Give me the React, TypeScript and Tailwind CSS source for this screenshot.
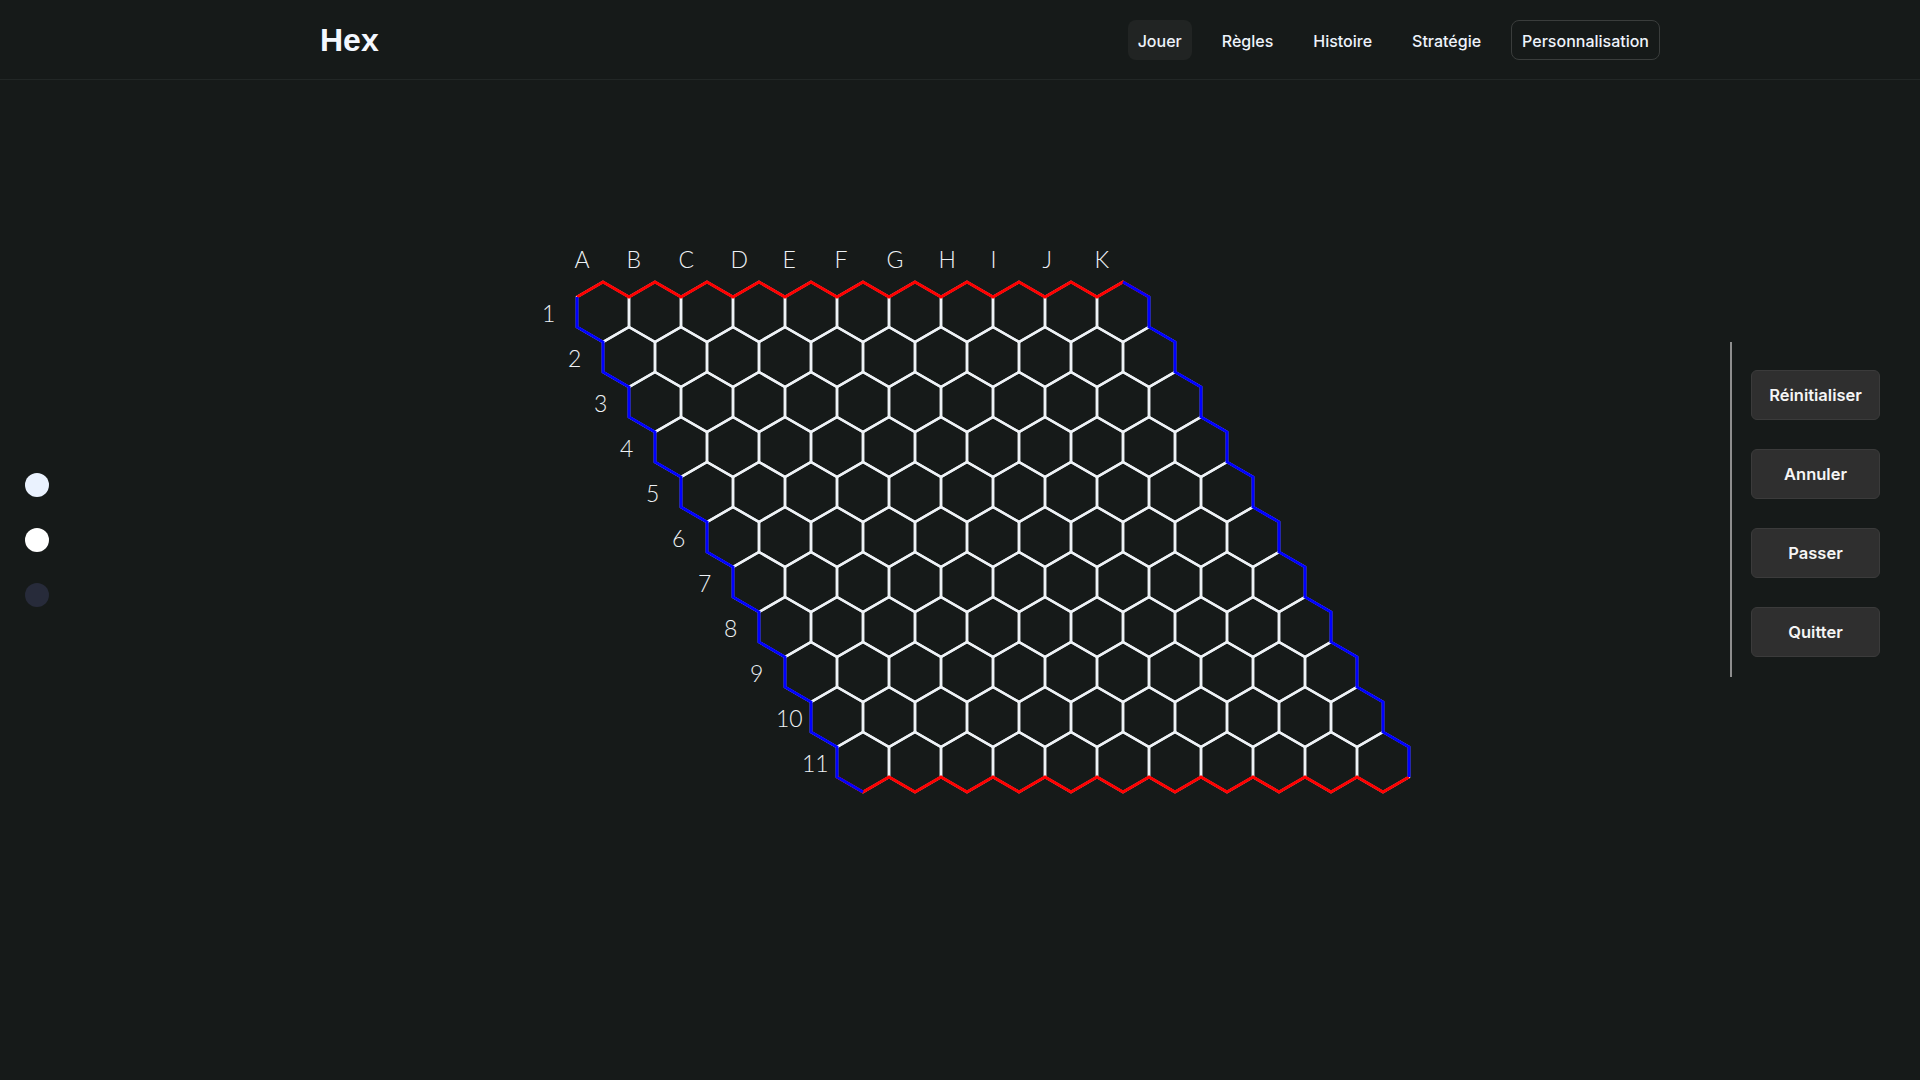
import React from "react";

const N = 11;
const COLS = ["A", "B", "C", "D", "E", "F", "G", "H", "I", "J", "K"];

// hex geometry (pointy top), in svg coords
const R = 30;
const HW = 26;
const center = (r: number, c: number) => ({ x: 73 + 52 * c + 26 * r, y: 72 + 45 * r });

const pts = (r: number, c: number) => {
  const { x, y } = center(r, c);
  return {
    t: [x, y - R],
    ur: [x + HW, y - R / 2],
    lr: [x + HW, y + R / 2],
    b: [x, y + R],
    ll: [x - HW, y + R / 2],
    ul: [x - HW, y - R / 2],
  };
};

const toStr = (list: number[][]) => list.map((p) => p.join(",")).join(" ");

function Board() {
  const hexes = [];
  for (let r = 0; r < N; r++) {
    for (let c = 0; c < N; c++) {
      const p = pts(r, c);
      hexes.push(
        <polygon
          key={`${r}-${c}`}
          points={toStr([p.t, p.ur, p.lr, p.b, p.ll, p.ul])}
          fill="none"
          stroke="#eef2f6"
          strokeWidth={2.5}
        />
      );
    }
  }

  const top: number[][] = [];
  const bottom: number[][] = [];
  const left: number[][] = [];
  const right: number[][] = [];
  for (let i = 0; i < N; i++) {
    const a = pts(0, i);
    if (i === 0) top.push(a.ul);
    top.push(a.t, a.ur);
    const b = pts(N - 1, i);
    if (i === 0) bottom.push(b.ll);
    bottom.push(b.b, b.lr);
    const l = pts(i, 0);
    left.push(l.ul, l.ll, l.b);
    const rr = pts(i, N - 1);
    right.push(rr.t, rr.ur, rr.lr);
  }

  return (
    <svg width={890} height={570} className="mt-[160px] shrink-0">
      <g fill="#eef2f6" fontFamily="Lato, 'Open Sans', sans-serif" fontWeight={300} fontSize={23}>
        {COLS.map((l, c) => (
          <text key={l} x={44.5 + 52 * c} y={28.3}>
            {l}
          </text>
        ))}
        {COLS.map((_, r) => (
          <text key={r} x={12 + 26 * r} y={center(r, 0).y + 9.5}>
            {r + 1}
          </text>
        ))}
      </g>
      {hexes}
      <polyline points={toStr(top)} fill="none" stroke="#ff0000" strokeWidth={3} />
      <polyline points={toStr(bottom)} fill="none" stroke="#ff0000" strokeWidth={3} />
      <polyline points={toStr(left)} fill="none" stroke="#0000ff" strokeWidth={3} />
      <polyline points={toStr(right)} fill="none" stroke="#0000ff" strokeWidth={3} />
    </svg>
  );
}

const navItems = ["Règles", "Histoire", "Stratégie"];
const actions = ["Réinitialiser", "Annuler", "Passer", "Quitter"];

export default function App() {
  return (
    <div className="min-h-screen w-full bg-[#161a19] text-white overflow-hidden">
      <header className="h-20 border-b border-[#222726] flex items-center justify-between pl-[320px] pr-[260px]">
        <h1 className="text-[32px] font-bold font-['Liberation_Sans',Arial,sans-serif] text-[#f4f8ff]">Hex</h1>
        <nav className="flex items-center gap-5 font-['Inter',sans-serif] text-[16px] font-medium text-[#eef3fb]">
          <button className="h-10 px-2.5 pt-0.5 rounded-lg bg-[#212423]">Jouer</button>
          {navItems.map((n) => (
            <button key={n} className="h-10 px-2.5 pt-0.5">
              {n}
            </button>
          ))}
          <button className="h-10 px-2.5 pt-0.5 rounded-lg border border-[#3a3d3c]">Personnalisation</button>
        </nav>
      </header>

      <main className="flex h-[1000px]">
        <div className="w-[530px] shrink-0 pl-[25px] pt-[393px]">
          <div className="flex flex-col gap-[31px]">
            <div className="w-6 h-6 rounded-full bg-[#eaf2fe]" />
            <div className="w-6 h-6 rounded-full bg-white" />
            <div className="w-6 h-6 rounded-full bg-[#272b3a]" />
          </div>
        </div>

        <Board />

        <div className="ml-[310px] mt-[262px] h-[335px] border-l-2 border-[#8e8e8e] pl-[19px] pt-[28px] flex flex-col gap-[29px]">
          {actions.map((a) => (
            <button
              key={a}
              className="w-[129px] h-[50px] rounded-md bg-[#2f2f2f] border border-[#3b3b3b] text-[16.5px] font-semibold font-['Inter',sans-serif] text-[#f5f5f5]"
            >
              {a}
            </button>
          ))}
        </div>
      </main>
    </div>
  );
}
